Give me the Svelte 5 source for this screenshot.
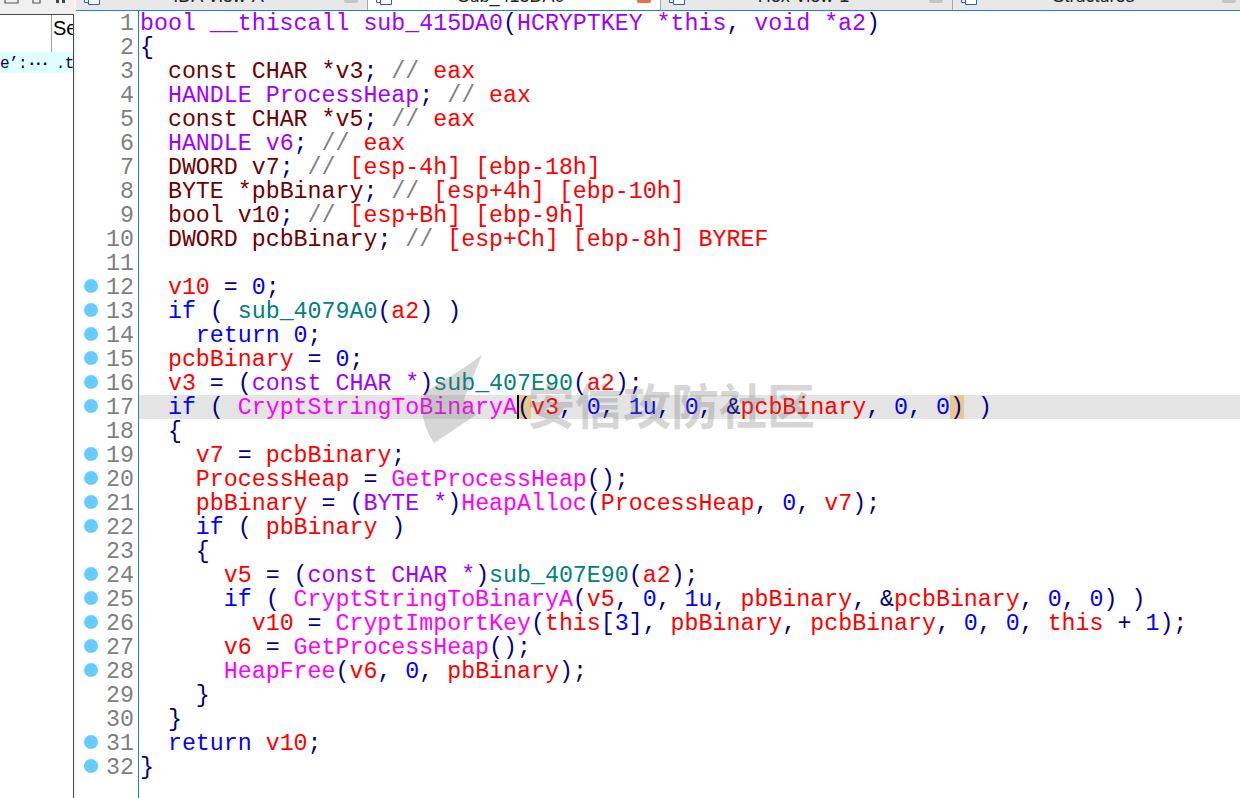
<script>
  // token shorthand: class, text
  const t = (c, s) => ({ c, s });
  const sp = (n) => t('', ' '.repeat(n));
  const decl = (color, type, name, comment) => [
    sp(2), t(color, type + ' ' + name), t('nv', ';'), t('', ' '), t('cm', '//'), t('', ' '), t('rd', comment)
  ];

  const lines = [
    [t('pu', 'bool __thiscall sub_415DA0'), t('nv', '('), t('pu', 'HCRYPTKEY *this'), t('nv', ','), t('pu', ' void *a2'), t('nv', ')')],
    [t('nv', '{')],
    decl('br', 'const CHAR', '*v3', 'eax'),
    decl('pu', 'HANDLE', 'ProcessHeap', 'eax'),
    decl('br', 'const CHAR', '*v5', 'eax'),
    decl('pu', 'HANDLE', 'v6', 'eax'),
    decl('br', 'DWORD', 'v7', '[esp-4h] [ebp-18h]'),
    decl('br', 'BYTE', '*pbBinary', '[esp+4h] [ebp-10h]'),
    decl('br', 'bool', 'v10', '[esp+Bh] [ebp-9h]'),
    decl('br', 'DWORD', 'pcbBinary', '[esp+Ch] [ebp-8h] BYREF'),
    [],
    [sp(2), t('rd', 'v10'), t('nv', ' = '), t('bl', '0'), t('nv', ';')],
    [sp(2), t('bl', 'if'), t('nv', ' ( '), t('te', 'sub_4079A0'), t('nv', '('), t('rd', 'a2'), t('nv', ') )')],
    [sp(4), t('bl', 'return 0'), t('nv', ';')],
    [sp(2), t('rd', 'pcbBinary'), t('nv', ' = '), t('bl', '0'), t('nv', ';')],
    [sp(2), t('rd', 'v3'), t('nv', ' = ('), t('pu', 'const CHAR *'), t('nv', ')'), t('te', 'sub_407E90'), t('nv', '('), t('rd', 'a2'), t('nv', ');')],
    [sp(2), t('bl', 'if'), t('nv', ' ( '), t('mg', 'CryptStringToBinaryA'), t('nv match caret', '('), t('rd', 'v3'), t('nv', ', '), t('bl', '0'), t('nv', ', '), t('bl', '1u'), t('nv', ', '), t('bl', '0'), t('nv', ', &'), t('rd', 'pcbBinary'), t('nv', ', '), t('bl', '0'), t('nv', ', '), t('bl', '0'), t('nv match', ')'), t('nv', ' )')],
    [sp(2), t('nv', '{')],
    [sp(4), t('rd', 'v7'), t('nv', ' = '), t('rd', 'pcbBinary'), t('nv', ';')],
    [sp(4), t('rd', 'ProcessHeap'), t('nv', ' = '), t('mg', 'GetProcessHeap'), t('nv', '();')],
    [sp(4), t('rd', 'pbBinary'), t('nv', ' = ('), t('pu', 'BYTE *'), t('nv', ')'), t('mg', 'HeapAlloc'), t('nv', '('), t('rd', 'ProcessHeap'), t('nv', ', '), t('bl', '0'), t('nv', ', '), t('rd', 'v7'), t('nv', ');')],
    [sp(4), t('bl', 'if'), t('nv', ' ( '), t('rd', 'pbBinary'), t('nv', ' )')],
    [sp(4), t('nv', '{')],
    [sp(6), t('rd', 'v5'), t('nv', ' = ('), t('pu', 'const CHAR *'), t('nv', ')'), t('te', 'sub_407E90'), t('nv', '('), t('rd', 'a2'), t('nv', ');')],
    [sp(6), t('bl', 'if'), t('nv', ' ( '), t('mg', 'CryptStringToBinaryA'), t('nv', '('), t('rd', 'v5'), t('nv', ', '), t('bl', '0'), t('nv', ', '), t('bl', '1u'), t('nv', ', '), t('rd', 'pbBinary'), t('nv', ', &'), t('rd', 'pcbBinary'), t('nv', ', '), t('bl', '0'), t('nv', ', '), t('bl', '0'), t('nv', ') )')],
    [sp(8), t('rd', 'v10'), t('nv', ' = '), t('mg', 'CryptImportKey'), t('nv', '('), t('rd', 'this'), t('nv', '['), t('bl', '3'), t('nv', '], '), t('rd', 'pbBinary'), t('nv', ', '), t('rd', 'pcbBinary'), t('nv', ', '), t('bl', '0'), t('nv', ', '), t('bl', '0'), t('nv', ', '), t('rd', 'this'), t('nv', ' + '), t('bl', '1'), t('nv', ');')],
    [sp(6), t('rd', 'v6'), t('nv', ' = '), t('mg', 'GetProcessHeap'), t('nv', '();')],
    [sp(6), t('mg', 'HeapFree'), t('nv', '('), t('rd', 'v6'), t('nv', ', '), t('bl', '0'), t('nv', ', '), t('rd', 'pbBinary'), t('nv', ');')],
    [sp(4), t('nv', '}')],
    [sp(2), t('nv', '}')],
    [sp(2), t('bl', 'return'), t('nv', ' '), t('rd', 'v10'), t('nv', ';')],
    [t('nv', '}')]
  ];

  const dotted = new Set([12, 13, 14, 15, 16, 17, 19, 20, 21, 22, 24, 25, 26, 27, 28, 31, 32]);

  const tabs = [
    { label: 'IDA View-A', width: 291, close: '' },
    { label: 'Sub_415DA0', width: 292, close: 'hot', active: true },
    { label: 'Hex View-1', width: 291, close: '' },
    { label: 'Structures', width: 287, close: '', last: true }
  ];
</script>

<div class="window">
  <aside class="side">
    <div class="side-tools">
      <svg width="74" height="14" viewBox="0 0 74 14">
        <path d="M5 0v3h13V0M33 0v3h7V0" fill="none" stroke="#555" stroke-width="1.2" />
        <path d="M56 0h3v3h-3zM62 0h3v3h-3z" fill="#444" />
      </svg>
    </div>
    <div class="side-panel">
      <div class="side-head"><span class="side-col"></span><span class="side-title">Se</span></div>
      <div class="side-row">e’:<span class="dots">···</span> .t</div>
    </div>
  </aside>

  <div class="strip"></div>

  <main class="main">
    <div class="tabs">
      {#each tabs as tab}
        <div class="tab" class:active={tab.active} class:last={tab.last} style="width:{tab.width}px">
          <svg class="tab-icon" width="16" height="5" viewBox="0 0 16 5">
            <path d="M.5 0v2.500h4M4.500 0v4.500h11V0" fill="#fff" stroke="#2a5fb0" />
          </svg>
          <span class="tab-label">{tab.label}</span>
          <span class="tab-close {tab.close}"></span>
        </div>
      {/each}
    </div>

    <div class="view">
      <div class="gutter">
        {#each lines as _, i}
          <div class="num">
            {#if dotted.has(i + 1)}<span class="dot"></span>{/if}
            <span>{i + 1}</span>
          </div>
        {/each}
      </div>
      <div class="code">
        {#each lines as line, i}
          <div class="line" class:current={i === 16}>
            {#each line as tok}<span class={tok.c}>{tok.s}</span>{/each}
          </div>
        {/each}
      </div>

      <div class="mark">
        <svg class="mark-logo" width="72" height="92" viewBox="0 0 72 92">
          <path d="M4 38 L42 14 L62 0 L44 44 L56 60 L14 88 Q-2 66 4 38Z" fill="#707070" />
        </svg>
        <span class="mark-text">安信攻防社区</span>
      </div>
    </div>
  </main>
</div>

<style>
  :global(body) {
    background: #fff;
  }

  .window {
    display: flex;
    width: 1240px;
    height: 798px;
    overflow: hidden;
    background: #fff;
  }

  .side {
    width: 74px;
    flex: none;
    display: flex;
    flex-direction: column;
    background: #f0f0f0;
  }

  .side-tools {
    height: 14px;
    overflow: hidden;
  }

  .side-tools svg {
    display: block;
  }

  .side-panel {
    flex: 1;
    background: #fff;
    border-top: 1px solid #404a4a;
    border-right: 1px solid #404a4a;
    overflow: hidden;
  }

  .side-head {
    display: flex;
    height: 37px;
  }

  .side-col {
    width: 51px;
    flex: none;
    border-right: 1px solid #a0a0a0;
  }

  .side-title {
    margin-left: 1px;
    font: 20px/26px "Liberation Sans", sans-serif;
    color: #000;
  }

  .side-row {
    height: 21px;
    background: #e0ffff;
    font: 16px/25px "Liberation Mono", monospace;
    letter-spacing: -0.6px;
    color: #000060;
    white-space: pre;
  }

  .dots {
    font-weight: 700;
    letter-spacing: -3px;
  }

  .strip {
    width: 2px;
    flex: none;
    background: #f5f5f5;
  }

  .main {
    flex: 1;
    min-width: 0;
    display: flex;
    flex-direction: column;
  }

  .tabs {
    display: flex;
    height: 10px;
    flex: none;
    gap: 1px;
    overflow: hidden;
    background: #a8a8a8;
    border-bottom: 1px solid #1e84d0;
    box-sizing: content-box;
  }

  .tab {
    position: relative;
    flex: none;
    display: flex;
    justify-content: center;
    padding-right: 6px;
    background: #e8e8e8;
    box-sizing: border-box;
    height: 10px;
  }

  .tab.active {
    background: #fff;
  }

  .tab.last {
    flex: 1;
  }

  .tab-icon {
    position: absolute;
    left: 8px;
    top: 0;
  }

  .tab-label {
    margin-top: -15px;
    font: 18px/22px "Liberation Sans", sans-serif;
    color: #222;
  }

  .tab-close {
    position: absolute;
    right: 9px;
    top: 0;
    width: 14px;
    height: 3px;
    background: #c4c4c4;
    border-radius: 0 0 2px 2px;
  }

  .tab-close.hot {
    background: #e0734f;
  }

  .tab.last .tab-close {
    right: 4px;
  }

  .view {
    position: relative;
    flex: 1;
    display: flex;
    min-height: 0;
    font: 23.28px/26px "Liberation Mono", monospace;
  }

  .gutter {
    width: 62px;
    flex: none;
    border-right: 1px solid #1e84d0;
    color: #808080;
    box-sizing: content-box;
  }

  .num {
    position: relative;
    height: 24px;
    padding-right: 4px;
    text-align: right;
  }

  .dot {
    position: absolute;
    left: 8px;
    top: 4px;
    width: 14px;
    height: 14px;
    border-radius: 50%;
    background: #66ccff;
  }

  .code {
    flex: 1;
    min-width: 0;
  }

  .line {
    height: 24px;
    padding-left: 1px;
    white-space: pre;
  }

  .line.current {
    background: #e4e4e4;
  }

  .line span {
    display: inline-block;
    height: 24px;
    vertical-align: top;
  }

  .pu { color: #a000ff; }
  .br { color: #700000; }
  .nv { color: #000080; }
  .rd { color: #ff0000; }
  .bl { color: #0000ff; }
  .te { color: #008080; }
  .mg { color: #ff00ff; }
  .cm { color: #808080; }

  .line .match {
    background: #e8c88c;
  }

  .line .caret {
    box-shadow: inset 2px 0 0 #000;
  }

  .mark {
    position: absolute;
    left: 344px;
    top: 344px;
    display: flex;
    pointer-events: none;
    opacity: 0.28;
  }

  .mark-logo {
    flex: none;
  }

  .mark-text {
    margin-left: 35px;
    margin-top: 23px;
    font: 700 48px/50px "Noto Sans CJK SC", sans-serif;
    color: #707070;
    white-space: nowrap;
  }
</style>
